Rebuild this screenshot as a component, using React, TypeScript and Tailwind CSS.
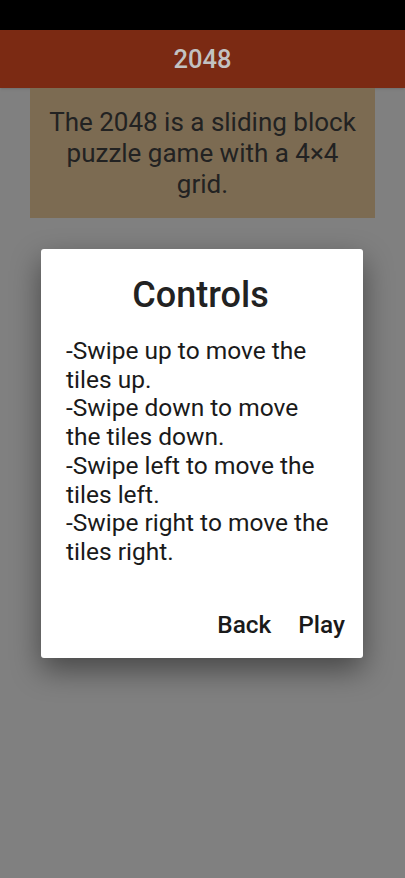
export default function App() {
  return (
    <div className="relative h-[878px] w-[405px] overflow-hidden bg-[#808080]" style={{ fontFamily: 'Roboto, "Noto Sans", sans-serif' }}>
      {/* status bar */}
      <div className="h-[30px] bg-black" />
      {/* app bar */}
      <div className="flex h-[58px] items-center justify-center bg-[#7b2a13] shadow-sm">
        <span className="text-[25.5px] font-medium text-[#c2c2c2]">2048</span>
      </div>
      <div className="px-[30px]">
        <div className="flex h-[130px] items-center justify-center bg-[#7c6b52] px-4 text-center text-[26px] leading-[31px] text-[#222222]">
          The 2048 is a sliding block puzzle game with a 4×4 grid.
        </div>
      </div>

      {/* dialog */}
      <div className="absolute left-[41px] top-[249px] w-[322px] rounded-[3px] bg-white shadow-[0_12px_30px_rgba(0,0,0,0.45)]">
        <div className="flex flex-col pl-[25px] pr-[28px] pt-[25px] pb-[18px]">
          <h2 className="text-center text-[36px] leading-[42px] font-medium text-[#222222]">Controls</h2>
          <p className="mt-[21px] text-[24.5px] leading-[28.7px] text-[#1a1a1a]">
            -Swipe up to move the tiles up.
            <br />
            -Swipe down to move the tiles down.
            <br />
            -Swipe left to move the tiles left.
            <br />
            -Swipe right to move the tiles right.
          </p>
          <div className="mt-[43px] -mr-[10px] flex justify-end gap-[27px] text-[24.4px] font-medium leading-[30px] text-[#1a1a1a]">
            <button>Back</button>
            <button>Play</button>
          </div>
        </div>
      </div>
    </div>
  )
}
